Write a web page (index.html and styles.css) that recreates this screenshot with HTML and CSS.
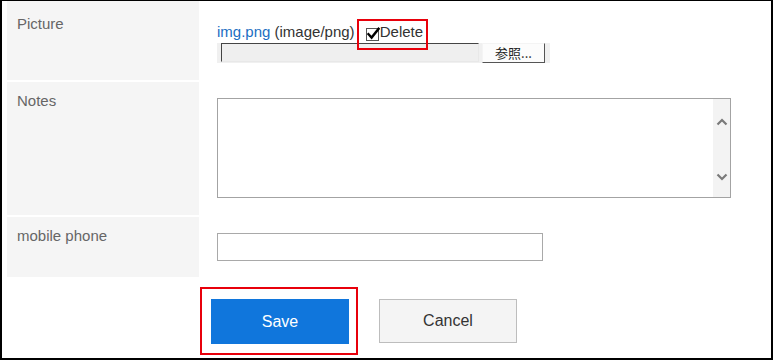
FILE: index.html
```html
<!DOCTYPE html>
<html>
<head>
<meta charset="utf-8">
<link rel="stylesheet" href="styles.css">
</head>
<body>
<div class="frame">
  <div class="form">
    <div class="lbl"></div><div class="val"></div>
    <div class="lbl">Picture</div>
    <div class="val pic">
      <div class="fileline"><a class="link" href="#">img.png</a> (image/png) <label class="del"><span class="cb"><svg width="14" height="14" viewBox="0 0 14 14"><path d="M2.5 7.2 L5.6 10.6 L12.6 1.8" fill="none" stroke="#000" stroke-width="2.4" stroke-linecap="square" stroke-linejoin="miter"/></svg></span>Delete</label></div>
      <div class="filebox"><span class="fpath"></span><span class="fbtn">参照...</span></div>
    </div>
    <div class="lbl">Notes</div>
    <div class="val notes">
      <div class="textarea">
        <div class="sb">
          <svg width="12" height="8" viewBox="0 0 12 8"><path d="M1.5 6.5 L6 2 L10.5 6.5" fill="none" stroke="#7a7a7a" stroke-width="2.2"/></svg>
          <svg width="12" height="8" viewBox="0 0 12 8"><path d="M1.5 1.5 L6 6 L10.5 1.5" fill="none" stroke="#7a7a7a" stroke-width="2.2"/></svg>
        </div>
      </div>
    </div>
    <div class="lbl">mobile phone</div>
    <div class="val mobile"><div class="input"></div></div>
  </div>
  <div class="actions">
    <div class="save-wrap"><button class="btn save">Save</button></div>
    <button class="btn cancel">Cancel</button>
  </div>
</div>
</body>
</html>
```
FILE: styles.css
```css
*, *::before, *::after { box-sizing: border-box; }
html, body { margin: 0; padding: 0; background: #fff; }
body { font-family: "Liberation Sans", Arial, sans-serif; font-size: 15px; color: #333; }
.frame {
  width: 773px; height: 360px;
  border-style: solid; border-color: #000;
  border-width: 1px 2px 2px 2px;
  overflow: hidden;
}
.form {
  display: grid;
  grid-template-columns: 192px 1fr;
  grid-template-rows: 2px 75px 133px 60px;
  row-gap: 2px;
  margin-left: 5px;
}
.lbl {
  background: #f5f5f5;
  color: #666;
  padding: 10px 0 0 10px;
  line-height: 17px;
}
.val { padding-left: 18px; }
.pic { padding-top: 18px; }
.fileline { line-height: 17px; height: 17px; white-space: nowrap; }
.link { color: #1b6ec2; text-decoration: none; }
.del { position: relative; display: inline-flex; align-items: center; margin-left: 7px; vertical-align: top; }
.del::after {
  content: ""; position: absolute; left: -9px; top: -4px; width: 71px; height: 31px;
  border: 2px solid #e8000b;
}
.cb {
  width: 13px; height: 13px; border: 1px solid #555; margin-right: 1px; position: relative; top: 3px;
  display: inline-block; background: #fff;
}
.cb svg { position: absolute; left: -1px; top: -2px; }
.filebox {
  margin-top: 3px; width: 333px; height: 20px; background: #f0f0f0;
  display: flex; padding-left: 4px;
}
.fpath {
  width: 258px; height: 19px;
  border-style: solid; border-width: 1px; border-color: #444 #e8e8e8 #e8e8e8 #444;
  background: #efefef;
}
.fbtn {
  margin-left: 3px; width: 63px; height: 20px; background: #fcfcfc;
  border-style: solid; border-width: 1px; border-color: #f4f4f4 #555 #555 #f4f4f4;
  font-family: "Noto Sans CJK JP", sans-serif; font-size: 13px; line-height: 17px; color: #222;
  text-align: center;
}
.notes, .mobile { padding-top: 16px; }
.textarea {
  width: 514px; height: 100px; border: 1px solid #a3a3a3; background: #fff;
  display: flex; justify-content: flex-end;
}
.sb {
  width: 17px; background: #f3f3f3;
  display: flex; flex-direction: column; justify-content: space-between; align-items: center;
  padding: 19px 0 16px;
}
.input { width: 326px; height: 28px; border: 1px solid #a9a9a9; }
.actions {
  display: flex; gap: 30px; align-items: flex-start;
  margin-top: 22px; padding-left: 209px;
}
.save-wrap { position: relative; }
.save-wrap::before {
  content: ""; position: absolute; left: -11px; top: -12px; width: 158px; height: 68px;
  border: 2px solid #e8000b;
}
.btn {
  font-family: "Liberation Sans", Arial, sans-serif; font-size: 16px;
  width: 138px; margin: 0; cursor: pointer; display: block;
}
.save { height: 45px; background: #1076dc; color: #fff; border: none; }
.cancel { height: 44px; background: #f4f4f4; color: #333; border: 1px solid #bdbdbd; }
```
